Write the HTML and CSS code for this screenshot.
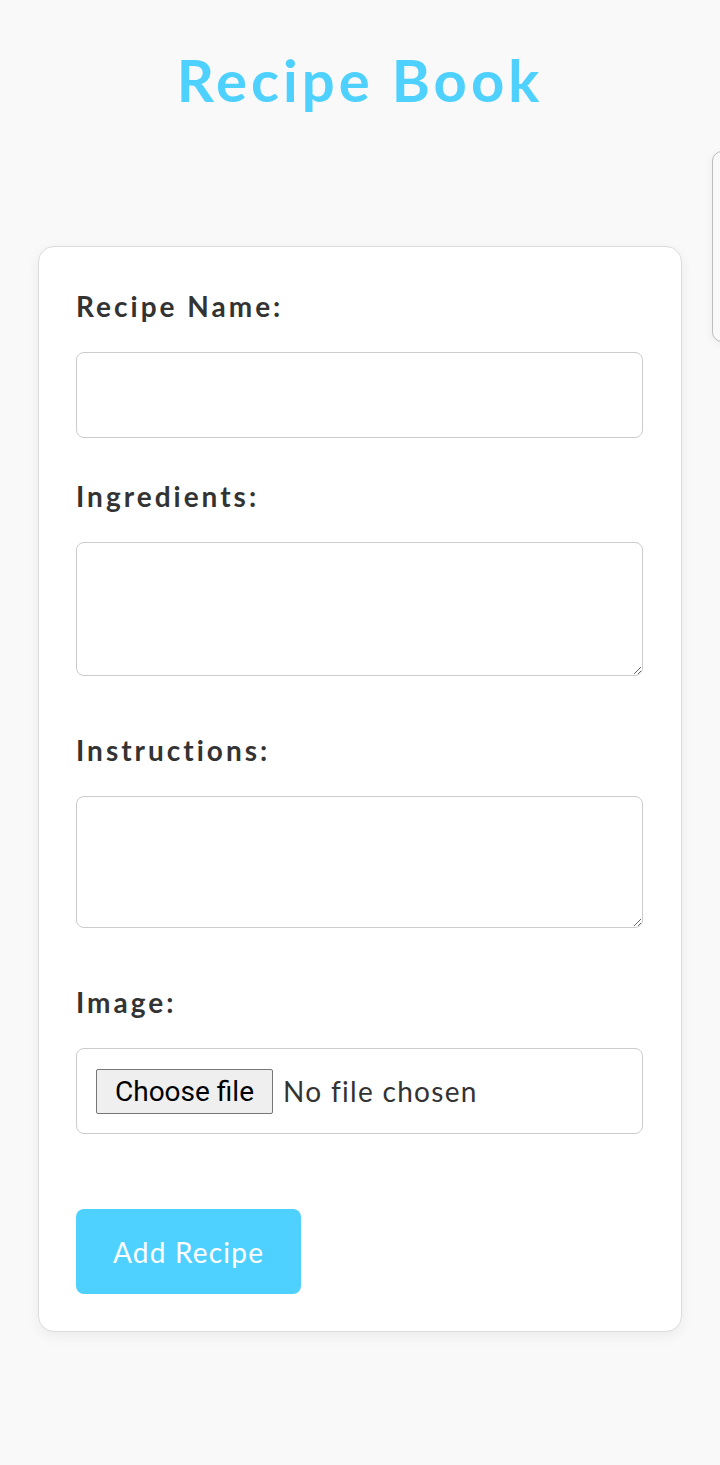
FILE: index.html
```html
<!DOCTYPE html>
<html lang="en">
<head>
<meta charset="utf-8">
<title>Recipe Book</title>
<link rel="stylesheet" href="styles.css">
</head>
<body>
<h1 class="title">Recipe Book</h1>
<div class="side-panel"></div>
<form class="card">
  <label class="label" for="name">Recipe Name:</label>
  <input class="field field-input" id="name" type="text">
  <label class="label" for="ingredients">Ingredients:</label>
  <textarea class="field field-area field-area-1" id="ingredients"></textarea>
  <label class="label" for="instructions">Instructions:</label>
  <textarea class="field field-area field-area-2" id="instructions"></textarea>
  <label class="label" for="image">Image:</label>
  <label class="field field-file" for="image">
    <input class="file-native" id="image" type="file">
    <span class="file-button">Choose file</span>
    <span class="file-status">No file chosen</span>
  </label>
  <button class="submit" type="button">Add Recipe</button>
</form>
</body>
</html>
```

FILE: styles.css
```css
html {
  overflow-x: hidden;
}
body {
  margin: 0;
  background: #f9f9f9;
  font-family: Lato, "Noto Sans", sans-serif;
  color: #333;
  position: relative;
  min-height: 1465px;
  overflow-x: hidden;
}
.title {
  margin: 45px 0 0;
  text-align: center;
  font-size: 58px;
  line-height: 70px;
  font-weight: 700;
  letter-spacing: 4px;
  color: #4fd1ff;
}
.side-panel {
  position: absolute;
  left: 712px;
  top: 151px;
  width: 40px;
  height: 191px;
  box-sizing: border-box;
  border: 1px solid #bdbdbd;
  border-radius: 10px;
  background: #f9f9f9;
  box-shadow: 0 2px 10px rgba(0, 0, 0, 0.06);
}
.card {
  box-sizing: border-box;
  margin: 131px 38px 0 38px;
  padding: 42px 38px 37px 37px;
  background: #fff;
  border: 1px solid #dcdcdc;
  border-radius: 16px;
  box-shadow: 0 4px 14px rgba(0, 0, 0, 0.06);
}
.label {
  display: block;
  font-size: 28px;
  line-height: 34px;
  font-weight: 700;
  letter-spacing: 3px;
  color: #333;
  margin-bottom: 29px;
}
.field {
  display: block;
  box-sizing: border-box;
  width: 100%;
  margin: 0;
  border: 1px solid #cccccc;
  border-radius: 8px;
  background: #fff;
  font-family: Lato, "Noto Sans", sans-serif;
  font-size: 28px;
  color: #333;
}
.field-input {
  height: 86px;
  padding: 0 18px;
  margin-bottom: 41px;
}
.field-area {
  padding: 12px 18px;
  resize: vertical;
  margin-bottom: 57px;
}
.field-area-1 {
  height: 134px;
}
.field-area-2 {
  height: 132px;
  margin-bottom: 57px;
}
.field-file {
  display: flex;
  align-items: center;
  height: 86px;
  padding: 0 19px;
  margin-bottom: 75px;
}
.file-native {
  display: none;
}
.file-button {
  box-sizing: border-box;
  display: flex;
  align-items: center;
  height: 45px;
  padding: 0 18px;
  margin-right: 10px;
  border: 1px solid #767676;
  border-radius: 2px;
  background: #efefef;
  color: #000;
  font-family: Roboto, "Liberation Sans", sans-serif;
  font-size: 28px;
}
.file-status {
  letter-spacing: 1.3px;
  color: #333;
}
.submit {
  display: block;
  height: 85px;
  padding: 0 37px;
  border: none;
  border-radius: 8px;
  background: #4fd1ff;
  color: #fff;
  font-family: Lato, "Noto Sans", sans-serif;
  font-size: 28px;
  font-weight: 400;
  letter-spacing: 1.2px;
}
```
